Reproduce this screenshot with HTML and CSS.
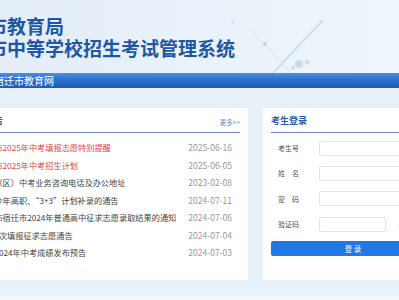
FILE: index.html
```html
<!DOCTYPE html>
<html lang="zh-CN">
<head>
    <meta charset="UTF-8">
    <title>宿迁市中等学校招生考试管理系统</title>
    <link rel="stylesheet" href="styles.css">
</head>
<body>
    <div class="container">
        <!-- 头部 -->
        <div class="header">
            <div class="title">
                <div>宿迁市教育局</div>
                <div>宿迁市中等学校招生考试管理系统</div>
            </div>
            <svg class="deco" width="140" height="73" viewBox="0 0 140 73">
                <line x1="102" y1="20" x2="52" y2="73" stroke="#c5d8ee" stroke-width="1.5"/>
                <line x1="30" y1="30" x2="70" y2="73" stroke="#d6e4f3" stroke-width="1"/>
                <circle cx="78" cy="64" r="4" fill="#c9dbef"/>
                <circle cx="86" cy="62" r="2.5" fill="#cfdff1"/>
                <circle cx="72" cy="68" r="2" fill="#c9dbef"/>
                <circle cx="44" cy="44" r="2" fill="#bfd3ea"/>
                <circle cx="12" cy="22" r="1.5" fill="#d2e1f2"/>
            </svg>
        </div>
        <div class="nav">
            <span>宿迁市教育网</span>
        </div>

        <div class="main">
            <!-- 通知公告 -->
            <div class="panel news">
                <div class="panel-head">
                    <span class="panel-title">通知公告</span>
                    <a href="#" class="more">更多&gt;&gt;</a>
                </div>
                <ul class="news-list">
                    <li class="hot"><span class="name">宿迁市2025年中考填报志愿特别提醒</span><span class="date">2025-06-16</span></li>
                    <li class="hot"><span class="name">宿迁市2025年中考招生计划</span><span class="date">2025-06-05</span></li>
                    <li><span class="name">各县（区）中考业务咨询电话及办公地址</span><span class="date">2023-02-08</span></li>
                    <li><span class="name">关于今年高职、“3+3”计划补录的通告</span><span class="date">2024-07-11</span></li>
                    <li><span class="name">已发布宿迁市2024年普通高中征求志愿录取结果的通知</span><span class="date">2024-07-06</span></li>
                    <li><span class="name">高中2次填报征求志愿通告</span><span class="date">2024-07-04</span></li>
                    <li><span class="name">关于2024年中考成绩发布预告</span><span class="date">2024-07-03</span></li>
                </ul>
            </div>

            <!-- 考生登录 -->
            <div class="panel login">
                <div class="panel-head">
                    <span class="panel-title">考生登录</span>
                </div>
                <form class="login-form">
                    <div class="row">
                        <label>考生号</label>
                        <input type="text" class="field">
                    </div>
                    <div class="row">
                        <label>姓名</label>
                        <input type="text" class="field">
                    </div>
                    <div class="row">
                        <label>密码</label>
                        <input type="password" class="field">
                    </div>
                    <div class="row">
                        <label>验证码</label>
                        <input type="text" class="field code-field">
                        <span class="code">- -</span>
                    </div>
                    <input type="button" value="登 录" class="login-button">
                    <div class="links"><a href="#">忘记密码</a></div>
                </form>
            </div>
        </div>

        <div class="footer"></div>
    </div>
</body>
</html>
```

FILE: styles.css
```css
body {
    margin: 0;
    font-family: "Noto Sans CJK SC", "Liberation Sans", sans-serif;
    background-color: #e8f0fa;
    overflow: hidden;
}

.container {
    width: 640px;
    margin-left: -41px;
}

.header {
    position: relative;
    height: 73px;
    background: linear-gradient(to right, #e3edf8, #edf4fb 60%, #f2f7fc);
    overflow: hidden;
}

.title {
    margin-left: -9px;
    padding-top: 15px;
    font-size: 19px;
    line-height: 22px;
    font-weight: bold;
    color: #1e57a8;
}

/* 头部右侧装饰 */
.deco {
    position: absolute;
    left: 262px;
    top: 0;
}

.nav {
    height: 15px;
    line-height: 15px;
    padding-left: 35px;
    font-size: 10px;
    color: white;
    background: linear-gradient(to bottom, #4a8fe0, #2c70cf 45%, #1e5bb8);
}

.main {
    display: flex;
    gap: 15px;
    padding-top: 20px;
}

.panel {
    background-color: white;
    height: 172px;
    padding: 0 8px;
    box-sizing: border-box;
}

.news {
    width: 289px;
}

.login {
    width: 260px;
}

.panel-head {
    display: flex;
    justify-content: space-between;
    align-items: center;
    height: 24px;
    border-bottom: 1.5px solid #7489c7;
}

.panel-title {
    font-size: 9px;
    font-weight: bold;
    color: #2a5caa;
}

.news .panel-title {
    color: #555;
}

.more {
    font-size: 6.5px;
    color: #5b8fd6;
    text-decoration: none;
    margin-top: 3px;
}

.news-list {
    list-style: none;
    margin: 0;
    padding: 6px 0 0;
}

.news-list li {
    display: flex;
    justify-content: space-between;
    height: 17.5px;
    line-height: 17.5px;
    padding: 0 8px 0 11px;
    font-size: 8.2px;
    color: #444;
}

.news-list li.hot {
    color: #e0474f;
}

.name {
    white-space: nowrap;
    overflow: hidden;
}

.date {
    font-size: 8.5px;
    color: #9a9a9a;
    margin-left: 6px;
}

.login-form {
    padding: 2.5px 0 0 7px;
}

.row {
    display: flex;
    align-items: center;
    height: 25.3px;
}

.row label {
    width: 21px;
    margin-right: 20px;
    font-size: 7px;
    color: #555;
    text-align-last: justify;
}

.field {
    width: 150px;
    height: 15px;
    border: 1px solid #e3e3e3;
    border-radius: 2px;
    box-sizing: border-box;
    padding: 0;
}

.code-field {
    width: 67px;
}

.code {
    margin-left: 10px;
    font-size: 7px;
    color: #c8c8c8;
}

.login-button {
    display: block;
    margin: 4px 0 0 -7px;
    width: 164px;
    height: 15px;
    padding: 0;
    border: none;
    border-radius: 2px;
    background-color: #1f78e6;
    color: white;
    font-family: "Noto Sans CJK SC", sans-serif;
    font-size: 7.5px;
    cursor: pointer;
}

.links {
    padding-left: 121px;
    margin-top: 9px;
    font-size: 6.5px;
    line-height: 8px;
}

.links a {
    color: #8aa9d6;
    text-decoration: none;
}

.footer {
    margin-top: 15px;
    height: 20px;
    background-color: #f3f7fc;
}
```
